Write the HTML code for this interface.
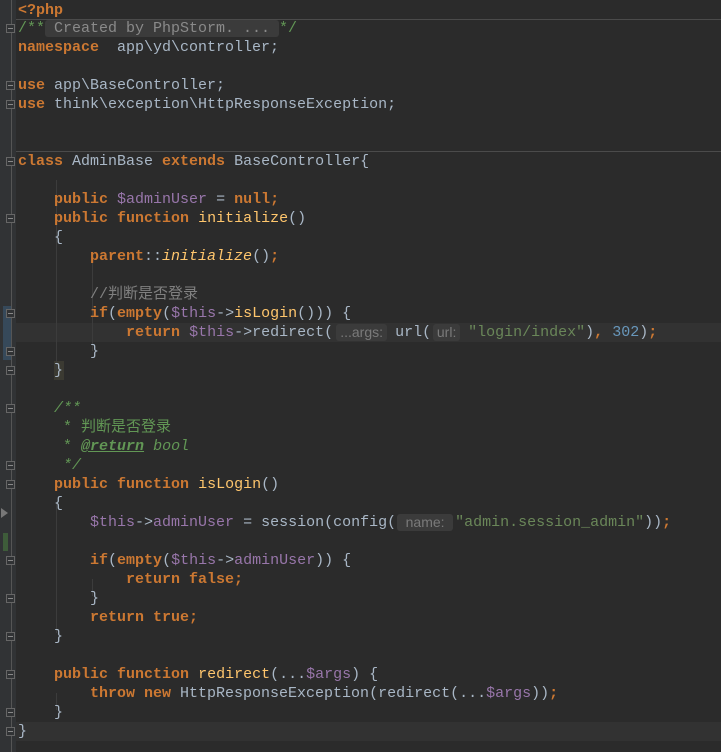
<!DOCTYPE html>
<html><head><meta charset="utf-8"><style>
html,body{margin:0;padding:0;}
body{width:721px;height:752px;background:#2b2b2b;position:relative;overflow:hidden;font-family:"Liberation Mono","Noto Sans CJK SC",monospace;font-size:15px;color:#a9b7c6;}
#gut{position:absolute;left:0;top:0;width:16px;height:752px;background:#313335;}
#gline{position:absolute;left:11px;top:0;width:1px;height:752px;background:#555;}
.l{position:absolute;left:18px;height:19px;line-height:19px;white-space:pre;}
.k{color:#cc7832;font-weight:bold;}
.v{color:#9876aa;}
.s{color:#6a8759;}
.n{color:#6897bb;}
.c{color:#808080;}
.d{color:#629755;}
.f{color:#ffc66d;}
.i{font-style:italic;}
.h{display:inline-block;background:#3b3b3b;color:#7a7a7a;font-family:"Liberation Sans",sans-serif;font-size:14px;line-height:17px;border-radius:3px;text-align:center;vertical-align:top;margin-top:1px;}
.sep{position:absolute;left:16px;right:0;height:1px;background:#4b4b4b;}
.hl{position:absolute;left:16px;right:0;height:19px;background:#323232;}
.fold{position:absolute;left:6px;width:9px;height:9px;border:1px solid #666;background:#313335;box-sizing:border-box;}
.fold:after{content:"";position:absolute;left:1px;top:3px;width:5px;height:1px;background:#888;}
.guide{position:absolute;width:1px;background:#3c3c3c;}
</style></head><body>
<div id="gut"></div><div id="gline"></div>
<div class="hl" style="top:323px"></div>
<div class="hl" style="top:722px;left:16px"></div>
<div class="sep" style="top:19px"></div>
<div class="sep" style="top:151px"></div>
<div style="position:absolute;left:3px;top:306px;width:8px;height:54px;background:#36495a"></div>
<div style="position:absolute;left:3px;top:533px;width:5px;height:18px;background:#3e5c3a"></div>
<div style="position:absolute;left:1px;top:508px;width:0;height:0;border-left:7px solid #777;border-top:5px solid transparent;border-bottom:5px solid transparent"></div>
<div style="position:absolute;left:54px;top:361px;width:10px;height:19px;background:#3b3a32"></div>
<div style="position:absolute;left:18px;top:722px;width:9px;height:19px;background:#323232"></div>
<div class="guide" style="left:56px;top:180px;height:190px"></div>
<div class="guide" style="left:56px;top:503px;height:130px"></div>
<div class="guide" style="left:56px;top:693px;height:17px"></div>
<div class="guide" style="left:92px;top:256px;height:95px"></div>
<div class="guide" style="left:92px;top:579px;height:17px"></div>
<div class="fold" style="top:24px"></div>
<div class="fold" style="top:81px"></div><div class="fold" style="top:100px"></div>
<div class="fold" style="top:157px"></div><div class="fold" style="top:214px"></div>
<div class="fold" style="top:309px"></div><div class="fold" style="top:347px"></div><div class="fold" style="top:366px"></div>
<div class="fold" style="top:404px"></div><div class="fold" style="top:461px"></div>
<div class="fold" style="top:480px"></div><div class="fold" style="top:556px"></div><div class="fold" style="top:594px"></div>
<div class="fold" style="top:632px"></div><div class="fold" style="top:670px"></div><div class="fold" style="top:708px"></div><div class="fold" style="top:727px"></div>

<div class="l" style="top:1px"><span class="k">&lt;?php</span></div>
<div class="l" style="top:19px"><span class="d">/**</span><span class="h" style="background:#3b3b3b;color:#8a8a8a;font-family:'Liberation Mono',monospace;font-size:15px;width:234px;text-align:left">&nbsp;Created by PhpStorm. ...</span><span class="d">*/</span></div>
<div class="l" style="top:38px"><span class="k">namespace</span>  app\yd\controller;</div>
<div class="l" style="top:76px"><span class="k">use</span> app\BaseController;</div>
<div class="l" style="top:95px"><span class="k">use</span> think\exception\HttpResponseException;</div>
<div class="l" style="top:152px"><span class="k">class</span> AdminBase <span class="k">extends</span> BaseController{</div>
<div class="l" style="top:190px">    <span class="k">public</span> <span class="v">$adminUser</span> = <span class="k">null;</span></div>
<div class="l" style="top:209px">    <span class="k">public function</span> <span class="f">initialize</span>()</div>
<div class="l" style="top:228px">    {</div>
<div class="l" style="top:247px">        <span class="k">parent</span>::<span class="f i">initialize</span>()<span class="k">;</span></div>
<div class="l" style="top:285px">        <span class="c">//判断是否登录</span></div>
<div class="l" style="top:304px">        <span class="k">if</span>(<span class="k">empty</span>(<span class="v">$this</span>-&gt;<span class="f">isLogin</span>())) {</div>
<div class="l" style="top:323px">            <span class="k">return</span> <span class="v">$this</span>-&gt;redirect(<span class="h" style="width:51px;margin-left:3px;margin-right:8px">...args:</span>url(<span class="h" style="width:27px;margin-left:2px;margin-right:8px">url:</span><span class="s">"login/index"</span>)<span class="k">,</span> <span class="n">302</span>)<span class="k">;</span></div>
<div class="l" style="top:342px">        }</div>
<div class="l" style="top:361px">    }</div>
<div class="l" style="top:399px">    <span class="d i">/**</span></div>
<div class="l" style="top:418px">     <span class="d">* 判断是否登录</span></div>
<div class="l" style="top:437px">     <span class="d">* <b style="text-decoration:underline" class="i">@return</b> <span class="i">bool</span></span></div>
<div class="l" style="top:456px">     <span class="d i">*/</span></div>
<div class="l" style="top:475px">    <span class="k">public function</span> <span class="f">isLogin</span>()</div>
<div class="l" style="top:494px">    {</div>
<div class="l" style="top:513px">        <span class="v">$this</span>-&gt;<span class="v">adminUser</span> = session(config(<span class="h" style="width:56px;margin-left:1px;margin-right:2px">name:</span><span class="s">"admin.session_admin"</span>))<span class="k">;</span></div>
<div class="l" style="top:551px">        <span class="k">if</span>(<span class="k">empty</span>(<span class="v">$this</span>-&gt;<span class="v">adminUser</span>)) {</div>
<div class="l" style="top:570px">            <span class="k">return false;</span></div>
<div class="l" style="top:589px">        }</div>
<div class="l" style="top:608px">        <span class="k">return true;</span></div>
<div class="l" style="top:627px">    }</div>
<div class="l" style="top:665px">    <span class="k">public function</span> <span class="f">redirect</span>(...<span class="v">$args</span>) {</div>
<div class="l" style="top:684px">        <span class="k">throw new</span> HttpResponseException(redirect(...<span class="v">$args</span>))<span class="k">;</span></div>
<div class="l" style="top:703px">    }</div>
<div class="l" style="top:722px">}</div>
</body></html>
